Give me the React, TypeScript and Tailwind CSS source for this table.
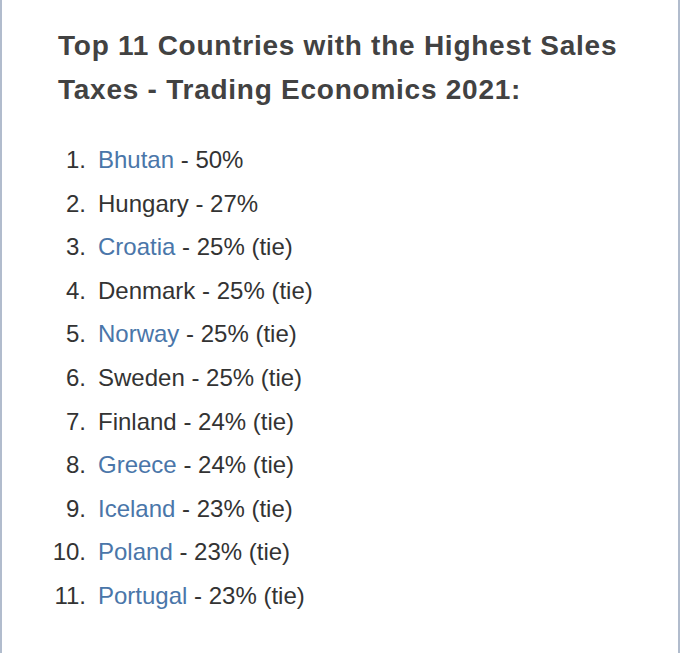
const countries = [
  { name: "Bhutan", rate: "50%", link: true },
  { name: "Hungary", rate: "27%", link: false },
  { name: "Croatia", rate: "25% (tie)", link: true },
  { name: "Denmark", rate: "25% (tie)", link: false },
  { name: "Norway", rate: "25% (tie)", link: true },
  { name: "Sweden", rate: "25% (tie)", link: false },
  { name: "Finland", rate: "24% (tie)", link: false },
  { name: "Greece", rate: "24% (tie)", link: true },
  { name: "Iceland", rate: "23% (tie)", link: true },
  { name: "Poland", rate: "23% (tie)", link: true },
  { name: "Portugal", rate: "23% (tie)", link: true },
];

export default function App() {
  return (
    <div
      className="min-h-[653px] w-full border-x-2 border-[#b1bccd] bg-white"
      style={{ fontFamily: '"Liberation Sans", Arial, sans-serif' }}
    >
      {/* Heading */}
      <h1 className="pl-[56px] pt-[24px] text-[28px] font-bold leading-[44px] tracking-[0.75px] text-[#424242]">
        Top 11 Countries with the Highest Sales
        <br />
        Taxes - Trading Economics 2021:
      </h1>

      {/* List */}
      <ol className="mt-[26px] text-[24px] leading-[43.6px] text-[#333333]">
        {countries.map((c, i) => (
          <li key={c.name} className="flex">
            <span className="w-[84px] shrink-0 text-right">{i + 1}.</span>
            <span className="pl-[12px]">
              {c.link ? (
                <a href="#" className="text-[#4a76a9]">
                  {c.name}
                </a>
              ) : (
                c.name
              )}{" "}
              - {c.rate}
            </span>
          </li>
        ))}
      </ol>
    </div>
  );
}
